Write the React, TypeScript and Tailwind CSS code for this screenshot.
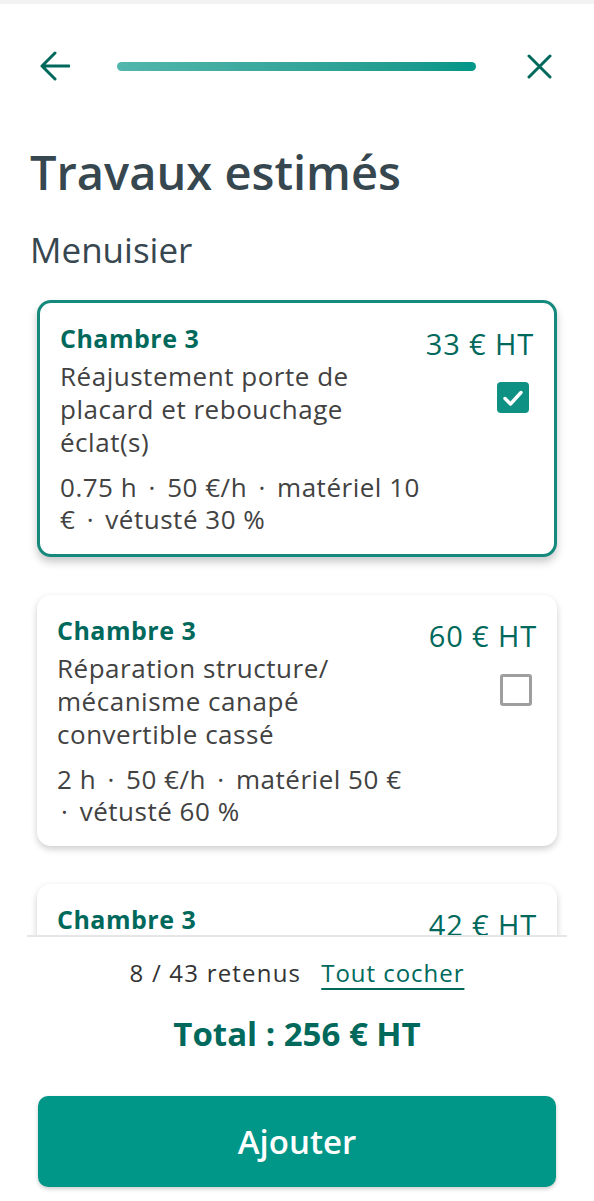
import React from "react";

type Job = {
  room: string;
  label: string;
  details: string;
  price: number;
  checked: boolean;
};

const jobs: Job[] = [
  {
    room: "Chambre 3",
    label: "Réajustement porte de placard et rebouchage éclat(s)",
    details: "0.75 h · 50 €/h · matériel 10 € · vétusté 30 %",
    price: 33,
    checked: true,
  },
  {
    room: "Chambre 3",
    label: "Réparation structure/ mécanisme canapé convertible cassé",
    details: "2 h · 50 €/h · matériel 50 € · vétusté 60 %",
    price: 60,
    checked: false,
  },
  {
    room: "Chambre 3",
    label: "Remplacement poignée de porte",
    details: "0.5 h · 50 €/h · matériel 17 € · vétusté 0 %",
    price: 42,
    checked: false,
  },
];

const BackArrow = () => (
  <svg width="30" height="30" viewBox="0 0 30 30" fill="none" stroke="#00695c" strokeWidth="3" strokeLinecap="round" strokeLinejoin="round">
    <path d="M15 2 L2 15 L15 28 M2 15 H29" />
  </svg>
);

const CloseIcon = () => (
  <svg width="25" height="25" viewBox="0 0 25 25" fill="none" stroke="#00695c" strokeWidth="3" strokeLinecap="round">
    <path d="M2 2 L23 23 M23 2 L2 23" />
  </svg>
);

const Checkbox = ({ checked }: { checked: boolean }) =>
  checked ? (
    <div className="w-[32px] h-[31px] rounded-[4px] bg-[#0e9183] flex items-center justify-center">
      <svg width="24" height="24" viewBox="0 0 24 24" fill="none" stroke="white" strokeWidth="3.4" strokeLinecap="round" strokeLinejoin="round">
        <path d="M4 12.5 L9.5 18 L20 6.5" />
      </svg>
    </div>
  ) : (
    <div className="w-[32px] h-[32px] rounded-[3px] border-[3px] border-[#9e9e9e] bg-white" />
  );

// separators get a little extra room on each side
const Details = ({ text }: { text: string }) => {
  const parts = text.split(" · ");
  return (
    <>
      {parts.map((part, i) => (
        <React.Fragment key={i}>
          {i > 0 && (
            <>
              {" "}
              <span className="mx-[4px]">·</span>{" "}
            </>
          )}
          {part}
        </React.Fragment>
      ))}
    </>
  );
};

const JobCard = ({ job }: { job: Job }) => (
  <div
    className={
      job.checked
        ? "shrink-0 bg-white rounded-[14px] border-[3px] border-[#14897c] shadow-[0_5px_8px_rgba(0,0,0,0.22)] px-[20px] pt-[20px] pb-[19px] flex justify-between"
        : "shrink-0 bg-white rounded-[14px] shadow-[0_3px_7px_rgba(0,0,0,0.2)] px-[20px] pt-[20px] pb-[19px] flex justify-between"
    }
  >
    <div className="w-[362px]">
      <p className="text-[25px] leading-[30px] font-bold tracking-[0.02em] text-[#00695c]">{job.room}</p>
      <p className="mt-[7px] text-[26px] leading-[33px] tracking-[0.02em] text-[#424242]">{job.label}</p>
      <p className="mt-[12px] text-[26px] leading-[32px] tracking-[0.02em] text-[#424242]">
        <Details text={job.details} />
      </p>
    </div>
    <div className="flex flex-col items-end">
      <p className="mt-[4px] text-[29px] leading-[34px] font-medium tracking-[0.03em] text-[#00695c] whitespace-nowrap">
        {job.price} € HT
      </p>
      <div className="mt-[21px] mr-[5px]">
        <Checkbox checked={job.checked} />
      </div>
    </div>
  </div>
);

export default function App() {
  return (
    <div className="w-full h-[1201px] bg-white flex flex-col font-['Open_Sans',sans-serif]">
      <div className="h-[4px] bg-[#f3f3f3]" />

      {/* header: back, progress, close */}
      <div className="flex items-center pl-[40px] pr-[42px] pt-[44px] h-[80px]">
        <BackArrow />
        <div className="flex-1 ml-[47px] mr-[51px] h-[9px] rounded-full bg-gradient-to-r from-[#52b6ac] to-[#009688]" />
        <CloseIcon />
      </div>

      <h1 className="mt-[62px] px-[30px] text-[47px] leading-[52px] font-semibold text-[#37474f]">
        Travaux estimés
      </h1>
      <h2 className="mt-[32px] px-[30px] text-[35px] leading-[40px] font-medium text-[#37474f]">
        Menuisier
      </h2>

      <div className="flex-1 min-h-0 overflow-hidden px-[37px] pt-[30px] flex flex-col gap-[38px]">
        {jobs.map((job, i) => (
          <JobCard key={i} job={job} />
        ))}
      </div>

      {/* footer summary */}
      <div className="shrink-0 flex flex-col items-center">
        <div className="self-stretch mx-[27px] h-[2px] bg-[#e6e6e6]" />
        <div className="pt-[21px] flex items-center gap-[20px]">
          <span className="text-[24px] leading-[30px] tracking-[0.05em] text-[#333333]">8 / 43 retenus</span>
          <button className="text-[24px] leading-[30px] tracking-[0.04em] text-[#00695c] underline underline-offset-[6px] decoration-[1.5px]">
            Tout cocher
          </button>
        </div>
        <p className="mt-[26px] text-[33px] leading-[40px] font-bold text-[#00695c]">Total : 256 € HT</p>
        <div className="self-stretch px-[38px] mt-[42px] pb-[14px]">
          <button className="w-full h-[91px] rounded-[10px] bg-[#009688] shadow-[0_2px_4px_rgba(0,0,0,0.2)] text-white text-[33px] font-semibold">
            Ajouter
          </button>
        </div>
      </div>
    </div>
  );
}
